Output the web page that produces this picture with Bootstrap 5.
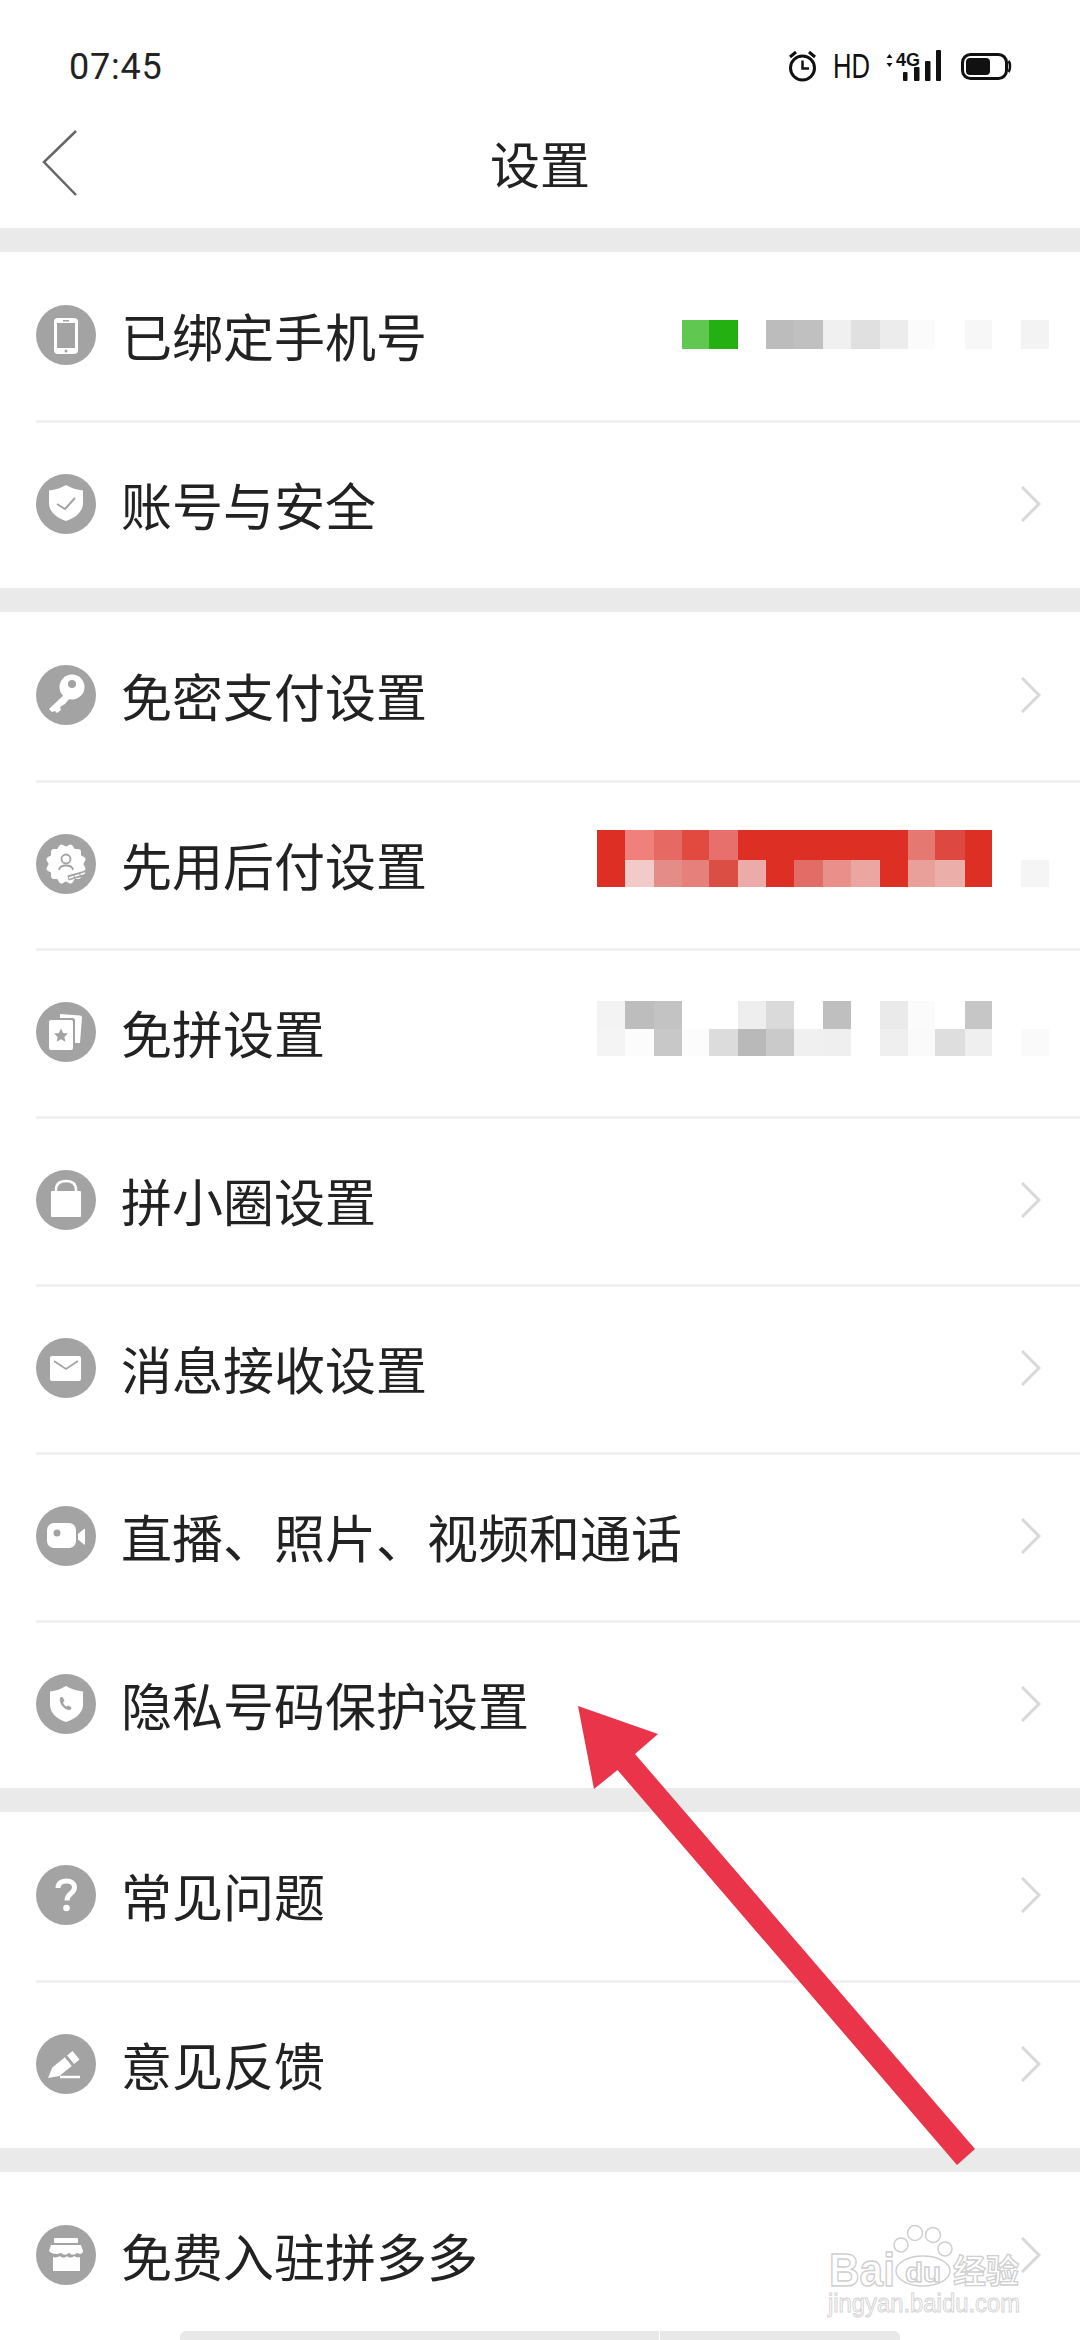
<!DOCTYPE html>
<html lang="zh-CN">
<head>
<meta charset="utf-8">
<title>设置</title>
<link href="https://cdn.jsdelivr.net/npm/bootstrap@5.3.0/dist/css/bootstrap.min.css" rel="stylesheet">
<style>
html,body{margin:0;height:2340px;overflow:hidden;background:#fff}
body{font-family:"Noto Sans CJK SC","Noto Sans",sans-serif;color:#222;position:relative}
.stat-bar{height:102px;padding:47px 68px 0 69px}
.stat-time{font-family:Roboto,"Liberation Sans",sans-serif;font-size:36px;line-height:40px;letter-spacing:.8px;color:#222}
.stat-ico{display:block;margin-top:3px}
.title-bar{height:126px}
.title-text{font-size:50px;line-height:120px;color:#222}
.back-ico{display:block;margin:28px 0 0 42px}
.set-gap{height:24px;background:#eaeaea}
.set-list{--bs-list-group-bg:transparent;border-radius:0}
.set-list .set-item{height:168px;margin-left:36px;padding:0 39px 3px 0;border:0;background:transparent;font-size:51px;line-height:60px;color:#222;border-radius:0;gap:25px}
.set-list .set-item + .set-item{border-top:3px solid #f1f1f1}
.set-ico{width:60px;height:60px;flex:none;display:block}
.go-ico{display:block;flex:none}
.blur-a{margin-right:-8px}
.blur-b{margin-right:-8px;margin-bottom:11px}
.blur-c{margin-right:-8px;margin-bottom:7px}
.mosaic{display:block;flex:none}
.over-art{position:absolute;left:0;top:0;pointer-events:none}
.home-strip{position:absolute;left:180px;bottom:0;width:720px;height:9px;display:flex;gap:1px}
.home-strip i{display:block;height:100%;background:#e8e8e8}
.home-a{width:479px;border-top-left-radius:6px}
.home-b{width:240px;border-top-right-radius:6px}
.wm-lg{font-family:"Liberation Sans",sans-serif;font-weight:700;fill:#fff;stroke:#cfcfcf;stroke-width:1.4px}
.wm-cn{font-family:"Noto Sans CJK SC",sans-serif;font-weight:700;fill:#fff;stroke:#cfcfcf;stroke-width:1.3px}
.wm-sm{font-family:"Liberation Sans",sans-serif;fill:#fff;stroke:#d4d4d4;stroke-width:1px}
.st-t{font-family:"Liberation Sans",sans-serif;fill:#111}
</style>
</head>
<body>

<div class="stat-bar d-flex justify-content-between align-items-start">
  <span class="stat-time">07:45</span>
  <svg class="stat-ico" width="224" height="36" viewBox="789 50 224 36">
    <circle cx="803.5" cy="68" r="12" fill="none" stroke="#111" stroke-width="3"/>
    <path d="M803.5 60.500V68.500H810" fill="none" stroke="#111" stroke-width="2.500"/>
    <path d="M791 57l6-5M816 57l-6-5" stroke="#111" stroke-width="3"/>
    <text class="st-t" x="834" y="78" font-size="35" textLength="37" lengthAdjust="spacingAndGlyphs">HD</text>
    <path d="M890.500 54l3 4h-6zM890.500 67l3-4h-6z" fill="#111"/>
    <text class="st-t" x="897" y="66" font-size="18" font-weight="700" textLength="24" lengthAdjust="spacingAndGlyphs">4G</text>
    <rect x="904" y="72" width="4.500" height="9" rx="1" fill="#111"/>
    <rect x="915" y="67" width="5.500" height="14" rx="1" fill="#111"/>
    <rect x="926" y="61" width="5.500" height="20" rx="1" fill="#111"/>
    <rect x="937" y="50" width="5" height="31" rx="1" fill="#111"/>
    <rect x="963.500" y="54.500" width="44" height="24" rx="8" fill="none" stroke="#111" stroke-width="3"/>
    <rect x="967" y="58" width="24" height="17" rx="4" fill="#111"/>
    <path d="M1009.500 61c2 2 2 9 0 11" fill="none" stroke="#111" stroke-width="2.500"/>
  </svg>
</div>

<div class="title-bar row g-0">
  <div class="col-3">
    <svg class="back-ico" width="36" height="66" viewBox="0 0 36 66"><path d="M34 1L2 32L34 65" fill="none" stroke="#666" stroke-width="2.500"/></svg>
  </div>
  <div class="col-6 text-center title-text">设置</div>
  <div class="col-3"></div>
</div>

<div class="set-gap"></div>

<div class="list-group list-group-flush set-list">
  <div class="list-group-item set-item d-flex align-items-center">
    <svg class="set-ico" viewBox="0 0 60 60"><circle cx="30" cy="30" r="30" fill="#a3a3a3"/><rect x="18" y="13" width="24" height="36" rx="4" fill="#fff"/><rect x="21" y="18" width="18" height="25" fill="#a3a3a3"/><rect x="27" y="15" width="6" height="1.500" fill="#a3a3a3"/><circle cx="30" cy="46" r="1.500" fill="#a3a3a3"/></svg>
    <span>已绑定手机号</span>
    <svg class="mosaic blur-a ms-auto" width="367" height="29" viewBox="682 322 367 29">
      <rect x="682" y="322" width="27" height="29" fill="#60c850"/><rect x="709" y="322" width="29" height="29" fill="#24b010"/>
      <rect x="766" y="322" width="28" height="29" fill="#bcbcbc"/><rect x="794" y="322" width="29" height="29" fill="#c0c0c0"/><rect x="823" y="322" width="28" height="29" fill="#f0f0f0"/><rect x="851" y="322" width="29" height="29" fill="#e0e0e0"/><rect x="880" y="322" width="28" height="29" fill="#ececec"/><rect x="908" y="322" width="27" height="29" fill="#fbfbfb"/><rect x="965" y="322" width="27" height="29" fill="#f7f7f7"/><rect x="1021" y="322" width="28" height="29" fill="#f3f3f3"/>
    </svg>
  </div>
  <div class="list-group-item set-item d-flex align-items-center">
    <svg class="set-ico" viewBox="0 0 60 60"><circle cx="30" cy="30" r="30" fill="#a3a3a3"/><path d="M30 11c5 3 11 5 17 5.500V29c0 9-8 15-17 18c-9-3-17-9-17-18V16.500c6-.5 12-2.500 17-5.500z" fill="#fff"/><path d="M21 30l8 5l10-11" fill="none" stroke="#a3a3a3" stroke-width="2"/></svg>
    <span>账号与安全</span>
    <svg class="go-ico ms-auto" width="20" height="36" viewBox="0 0 20 36"><path d="M1 1L18 18L1 35" fill="none" stroke="#d9d9d9" stroke-width="3"/></svg>
  </div>
</div>

<div class="set-gap"></div>

<div class="list-group list-group-flush set-list">
  <div class="list-group-item set-item d-flex align-items-center">
    <svg class="set-ico" viewBox="0 0 60 60"><circle cx="30" cy="30" r="30" fill="#a3a3a3"/><circle cx="36" cy="22" r="12.500" fill="#fff"/><circle cx="36" cy="19" r="4" fill="#a3a3a3"/><path d="M30 28L13 44l3 3l3-1l2 2l4-3l-1-3l3-2l2-1l5-6z" fill="#fff"/></svg>
    <span>免密支付设置</span>
    <svg class="go-ico ms-auto" width="20" height="36" viewBox="0 0 20 36"><path d="M1 1L18 18L1 35" fill="none" stroke="#d9d9d9" stroke-width="3"/></svg>
  </div>
  <div class="list-group-item set-item d-flex align-items-center">
    <svg class="set-ico" viewBox="0 0 60 60"><circle cx="30" cy="30" r="30" fill="#a3a3a3"/><g fill="#fff"><rect x="15" y="15" width="30" height="30" rx="3"/><rect x="15" y="15" width="30" height="30" rx="3" transform="rotate(30 30 30)"/><rect x="15" y="15" width="30" height="30" rx="3" transform="rotate(60 30 30)"/></g><circle cx="30" cy="25" r="4.500" fill="none" stroke="#a3a3a3" stroke-width="1.800"/><path d="M23 36c1-6 13-6 14 0" fill="none" stroke="#a3a3a3" stroke-width="1.800"/><path d="M32 44l18-5" stroke="#a3a3a3" stroke-width="5"/><path d="M33 44l16-5" stroke="#fff" stroke-width="1.500" stroke-dasharray="5 1"/></svg>
    <span>先用后付设置</span>
    <svg class="mosaic blur-b ms-auto" width="452" height="57" viewBox="597 830 452 57">
      <rect x="597" y="830" width="395" height="57" fill="#de2f24"/>
      <rect x="625" y="830" width="29" height="30" fill="#f0807c"/><rect x="654" y="830" width="28" height="30" fill="#e66a62"/><rect x="682" y="830" width="27" height="30" fill="#e24a40"/><rect x="709" y="830" width="29" height="30" fill="#e8706c"/><rect x="908" y="830" width="27" height="30" fill="#e57870"/><rect x="935" y="830" width="30" height="30" fill="#dd4840"/>
      <rect x="625" y="860" width="29" height="27" fill="#f2cac8"/><rect x="654" y="860" width="28" height="27" fill="#e48c88"/><rect x="682" y="860" width="27" height="27" fill="#e5807a"/><rect x="709" y="860" width="29" height="27" fill="#da4e44"/><rect x="738" y="860" width="28" height="27" fill="#ecaaa8"/><rect x="794" y="860" width="29" height="27" fill="#e26c66"/><rect x="823" y="860" width="28" height="27" fill="#ea908a"/><rect x="851" y="860" width="29" height="27" fill="#eca6a2"/><rect x="908" y="860" width="27" height="27" fill="#eaa09a"/><rect x="935" y="860" width="30" height="27" fill="#ecaea8"/>
      <rect x="1021" y="860" width="28" height="27" fill="#f5f5f5"/>
    </svg>
  </div>
  <div class="list-group-item set-item d-flex align-items-center">
    <svg class="set-ico" viewBox="0 0 60 60"><circle cx="30" cy="30" r="30" fill="#a3a3a3"/><path d="M24 12l20 1.500c1 0 2 1 2 2L44 41h-5V18c0-1-1-2-2-2H24z" fill="#fff"/><rect x="13" y="18" width="24" height="30" rx="2" fill="#fff"/><path d="M25 26.500l2.100 4.500l4.900.600l-3.600 3.300l1 4.900l-4.400-2.500l-4.400 2.500l1-4.900l-3.600-3.300l4.900-.6z" fill="#a3a3a3"/></svg>
    <span>免拼设置</span>
    <svg class="mosaic blur-c ms-auto" width="452" height="55" viewBox="597 1001 452 55">
      <rect x="597" y="1001" width="28" height="28" fill="#f3f3f3"/><rect x="625" y="1001" width="29" height="28" fill="#bdbdbd"/><rect x="654" y="1001" width="28" height="28" fill="#c3c3c3"/><rect x="738" y="1001" width="28" height="28" fill="#eeeeee"/><rect x="766" y="1001" width="28" height="28" fill="#dadada"/><rect x="823" y="1001" width="28" height="28" fill="#bfbfbf"/><rect x="880" y="1001" width="28" height="28" fill="#eaeaea"/><rect x="908" y="1001" width="27" height="28" fill="#fbfbfb"/><rect x="965" y="1001" width="27" height="28" fill="#c6c6c6"/>
      <rect x="597" y="1029" width="28" height="27" fill="#f4f4f4"/><rect x="625" y="1029" width="29" height="27" fill="#fcfcfc"/><rect x="654" y="1029" width="28" height="27" fill="#c8c8c8"/><rect x="682" y="1029" width="27" height="27" fill="#fcfcfc"/><rect x="709" y="1029" width="29" height="27" fill="#dcdcdc"/><rect x="738" y="1029" width="28" height="27" fill="#b9b9b9"/><rect x="766" y="1029" width="28" height="27" fill="#cacaca"/><rect x="794" y="1029" width="29" height="27" fill="#f0f0f0"/><rect x="823" y="1029" width="28" height="27" fill="#efefef"/><rect x="880" y="1029" width="28" height="27" fill="#efefef"/><rect x="908" y="1029" width="27" height="27" fill="#fafafa"/><rect x="935" y="1029" width="30" height="27" fill="#dedede"/><rect x="965" y="1029" width="27" height="27" fill="#efefef"/><rect x="1021" y="1029" width="28" height="27" fill="#fafafa"/>
    </svg>
  </div>
  <div class="list-group-item set-item d-flex align-items-center">
    <svg class="set-ico" viewBox="0 0 60 60"><circle cx="30" cy="30" r="30" fill="#a3a3a3"/><rect x="15" y="21" width="30" height="26" rx="1" fill="#fff"/><path d="M20 22v-2c0-6 4-9 10-9s10 3 10 9v2" fill="none" stroke="#fff" stroke-width="2.500"/></svg>
    <span>拼小圈设置</span>
    <svg class="go-ico ms-auto" width="20" height="36" viewBox="0 0 20 36"><path d="M1 1L18 18L1 35" fill="none" stroke="#d9d9d9" stroke-width="3"/></svg>
  </div>
  <div class="list-group-item set-item d-flex align-items-center">
    <svg class="set-ico" viewBox="0 0 60 60"><circle cx="30" cy="30" r="30" fill="#a3a3a3"/><rect x="14" y="18" width="31" height="25" rx="2" fill="#fff"/><path d="M18 23l12 8l12-8" fill="none" stroke="#a3a3a3" stroke-width="1.800"/></svg>
    <span>消息接收设置</span>
    <svg class="go-ico ms-auto" width="20" height="36" viewBox="0 0 20 36"><path d="M1 1L18 18L1 35" fill="none" stroke="#d9d9d9" stroke-width="3"/></svg>
  </div>
  <div class="list-group-item set-item d-flex align-items-center">
    <svg class="set-ico" viewBox="0 0 60 60"><circle cx="30" cy="30" r="30" fill="#a3a3a3"/><rect x="11" y="17" width="29" height="25" rx="7" fill="#fff"/><circle cx="21" cy="27" r="3.500" fill="#a3a3a3"/><path d="M42 28l6-5c.5-.5 1-.2 1 .5V38c0 .7-.5 1-1 .5l-6-5z" fill="#fff"/></svg>
    <span>直播、照片、视频和通话</span>
    <svg class="go-ico ms-auto" width="20" height="36" viewBox="0 0 20 36"><path d="M1 1L18 18L1 35" fill="none" stroke="#d9d9d9" stroke-width="3"/></svg>
  </div>
  <div class="list-group-item set-item d-flex align-items-center">
    <svg class="set-ico" viewBox="0 0 60 60"><circle cx="30" cy="30" r="30" fill="#a3a3a3"/><path d="M30 12c5 3 11 5 17 5.500V31c0 8-8 14-17 17c-9-3-16-9-16-17V17.500c6-.5 11-2.500 16-5.500z" fill="#fff"/><path d="M24 24c-1 5 3 11 9 12c2 0 3-2 2-3l-3-1.500l-1.500 1c-1.500-.5-3-2.500-3.500-4l1.500-1.500l-1.500-3.500c-1-1-2.500-.5-3 .5z" fill="#a3a3a3"/></svg>
    <span>隐私号码保护设置</span>
    <svg class="go-ico ms-auto" width="20" height="36" viewBox="0 0 20 36"><path d="M1 1L18 18L1 35" fill="none" stroke="#d9d9d9" stroke-width="3"/></svg>
  </div>
</div>

<div class="set-gap"></div>

<div class="list-group list-group-flush set-list">
  <div class="list-group-item set-item d-flex align-items-center">
    <svg class="set-ico" viewBox="0 0 60 60"><circle cx="30" cy="30" r="30" fill="#a3a3a3"/><path d="M22 23c0-5 4-7 8.500-7c4.500 0 8 2.500 8 6.500c0 6-7.500 6-7.500 13" fill="none" stroke="#fff" stroke-width="5"/><circle cx="30.500" cy="43" r="3.300" fill="#fff"/></svg>
    <span>常见问题</span>
    <svg class="go-ico ms-auto" width="20" height="36" viewBox="0 0 20 36"><path d="M1 1L18 18L1 35" fill="none" stroke="#d9d9d9" stroke-width="3"/></svg>
  </div>
  <div class="list-group-item set-item d-flex align-items-center">
    <svg class="set-ico" viewBox="0 0 60 60"><circle cx="30" cy="30" r="30" fill="#a3a3a3"/><path d="M36.500 17l7 8.600l-5.400 4.400l-7-8.600zM28.800 23.300l7 8.600L23.300 42L12 44l4.300-10.600z" fill="#fff"/><path d="M24 43h20" stroke="#fff" stroke-width="2.500"/></svg>
    <span>意见反馈</span>
    <svg class="go-ico ms-auto" width="20" height="36" viewBox="0 0 20 36"><path d="M1 1L18 18L1 35" fill="none" stroke="#d9d9d9" stroke-width="3"/></svg>
  </div>
</div>

<div class="set-gap"></div>

<div class="list-group list-group-flush set-list">
  <div class="list-group-item set-item d-flex align-items-center">
    <svg class="set-ico" viewBox="0 0 60 60"><circle cx="30" cy="30" r="30" fill="#a3a3a3"/><rect x="18" y="13" width="24" height="5" rx="1" fill="#fff"/><path d="M15 20h30l2 6c0 3-4 4-6 1.500c-2 3-6 3-8 0c-2 3-6 3-8 0c-2 2.500-10 1.500-12-1.500z" fill="#fff"/><path d="M17 32c3 1 5 0 7-1c2 2 5 2 7 0c2 2 5 2 7 0c2 1 4 2 6 1v14H17z" fill="#fff"/></svg>
    <span>免费入驻拼多多</span>
    <svg class="go-ico ms-auto" width="20" height="36" viewBox="0 0 20 36"><path d="M1 1L18 18L1 35" fill="none" stroke="#d9d9d9" stroke-width="3"/></svg>
  </div>
</div>

<div class="home-strip"><i class="home-a"></i><i class="home-b"></i></div>

<svg class="over-art" width="1080" height="2340" viewBox="0 0 1080 2340">
  <g fill="#fff" stroke="#cfcfcf" stroke-width="1.500">
    <circle cx="901" cy="2245" r="7"/><circle cx="915" cy="2233" r="7.500"/><circle cx="933" cy="2235" r="7.500"/><circle cx="945" cy="2249" r="7"/>
    <ellipse cx="923" cy="2271" rx="27" ry="15"/>
  </g>
  <text class="wm-lg" x="829" y="2286" font-size="46" textLength="66" lengthAdjust="spacingAndGlyphs">Bai</text>
  <text class="wm-lg" x="905" y="2282" font-size="28" textLength="36" lengthAdjust="spacingAndGlyphs">du</text>
  <text class="wm-cn" x="953" y="2283" font-size="33">经验</text>
  <text class="wm-sm" x="828" y="2312" font-size="26" textLength="192" lengthAdjust="spacingAndGlyphs">jingyan.baidu.com</text>
  <polygon points="578,1706 658,1734 635,1754 975,2149 957,2165 617.500,1770 594,1789" fill="#e9344a"/>
</svg>

<script src="https://cdn.jsdelivr.net/npm/bootstrap@5.3.0/dist/js/bootstrap.bundle.min.js"></script>
</body>
</html>
